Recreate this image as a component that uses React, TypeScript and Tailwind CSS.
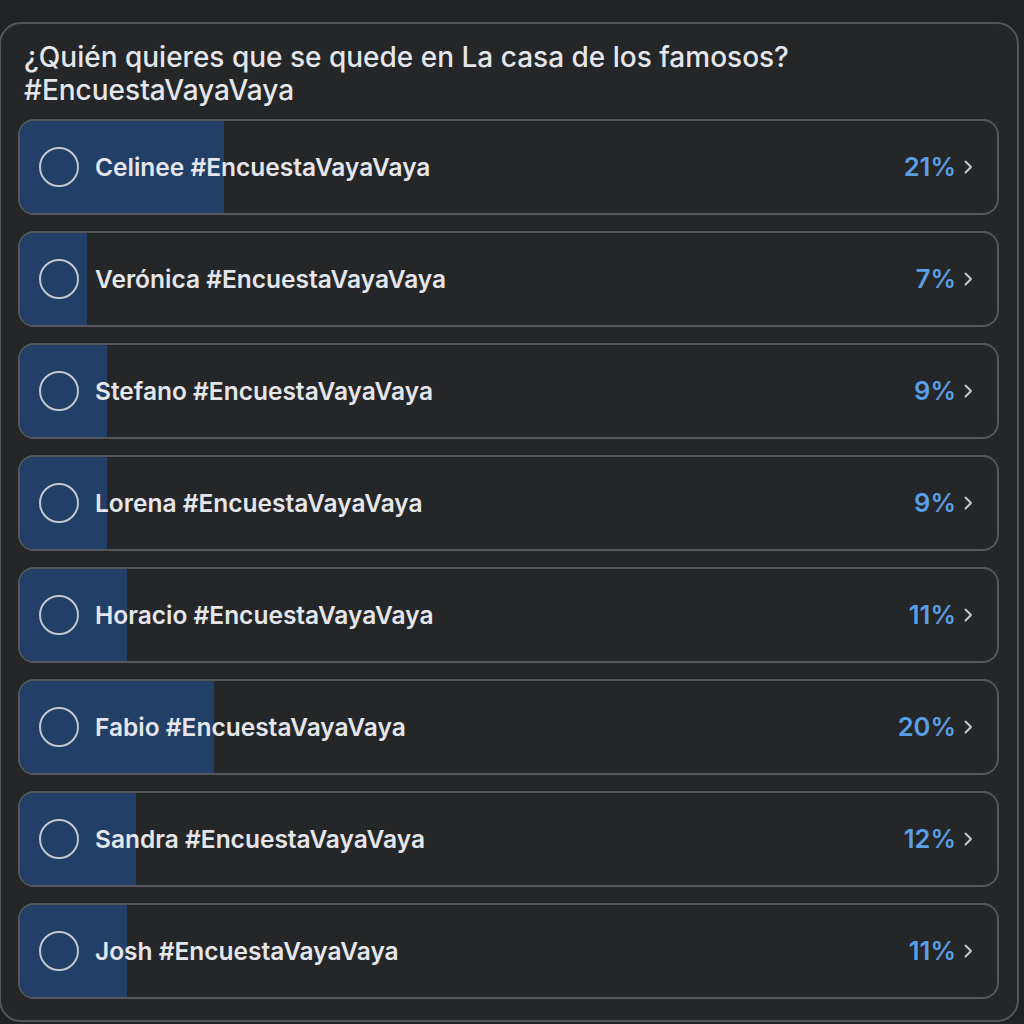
const options = [
  { name: "Celinee", pct: 21, bar: 204 },
  { name: "Verónica", pct: 7, bar: 67 },
  { name: "Stefano", pct: 9, bar: 87 },
  { name: "Lorena", pct: 9, bar: 87 },
  { name: "Horacio", pct: 11, bar: 107 },
  { name: "Fabio", pct: 20, bar: 194 },
  { name: "Sandra", pct: 12, bar: 116 },
  { name: "Josh", pct: 11, bar: 107 },
];

function Chevron() {
  return (
    <svg width="10" height="14" viewBox="0 0 10 14" fill="none" className="ml-[7px]">
      <path d="M2.5 1.5l5.5 5.5-5.5 5.5" stroke="#c7c9cd" strokeWidth="2" strokeLinecap="round" strokeLinejoin="round" />
    </svg>
  );
}

export default function App() {
  return (
    <div
      className="h-[1024px] w-[1024px] overflow-hidden bg-[#212224] pt-[22px]"
      style={{ fontFamily: "Inter, 'Noto Sans', sans-serif" }}
    >
      <div className="ml-[-1px] h-[1000px] w-[1020px] rounded-[22px] border-2 border-[#55565a] bg-[#252628] pl-[17px] pr-[19px] pt-[17px]">
        <h1 className="pl-[6px] text-[28px] font-medium leading-[33px] text-[#e4e6eb]">
          ¿Quién quieres que se quede en La casa de los famosos?
          <br />
          #EncuestaVayaVaya
        </h1>
        <div className="mt-[12px] flex flex-col gap-[16px]">
          {options.map((o) => (
            <div
              key={o.name}
              className="relative h-[96px] w-[981px] overflow-hidden rounded-[16px] border-2 border-[#56575a]"
            >
              <div className="absolute inset-y-0 left-0 bg-[#213f67]" style={{ width: o.bar }} />
              <div className="relative flex h-full items-center pl-[19px] pr-[24px]">
                <span className="h-[40px] w-[40px] shrink-0 rounded-full border-[2.5px] border-[#c3c6cc]" />
                <span className="ml-[16px] text-[24.5px] font-semibold text-[#e4e6eb]">
                  {o.name} #EncuestaVayaVaya
                </span>
                <span className="ml-auto text-[25.5px] font-semibold text-[#5b9fe6]">{o.pct}%</span>
                <Chevron />
              </div>
            </div>
          ))}
        </div>
      </div>
    </div>
  );
}
